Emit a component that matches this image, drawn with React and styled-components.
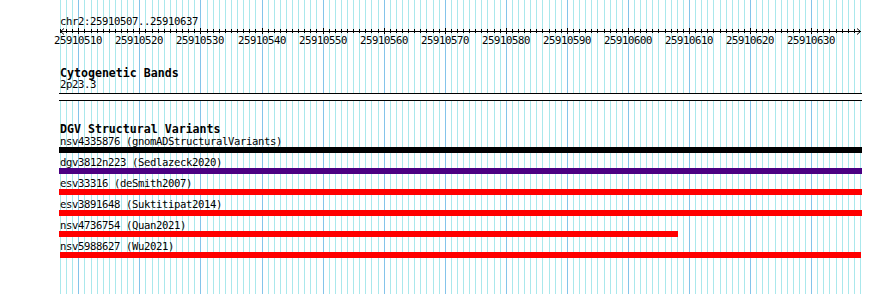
import React from "react"
import styled, { createGlobalStyle } from "styled-components"

const START = 25910507
const END = 25910637
const LEFT = 60
const WIDTH = 800
const BASE = WIDTH / (END - START + 1)

const xOf = (pos) => Math.round(LEFT + (pos - START) * BASE)

const GlobalStyle = createGlobalStyle`
  html, body {
    margin: 0;
    padding: 0;
    background: #fff;
  }
`

const Browser = styled.div`
  position: relative;
  width: 890px;
  height: 294px;
  overflow: hidden;
  background: #fff;
  font-family: "DejaVu Sans Mono", "Liberation Mono", monospace;
  color: #000;
`

const GuideLayer = styled.svg`
  position: absolute;
  inset: 0;
  z-index: 0;
`

const Tracks = styled.div`
  position: relative;
  z-index: 1;
  display: flex;
  flex-direction: column;
  width: 803px;
  margin-left: 59px;
  padding-top: 16px;
`

const Text = styled.div`
  font-size: 10.6px;
  letter-spacing: -0.38px;
  line-height: ${(p) => p.$lh || 11}px;
  height: ${(p) => p.$h || 11}px;
  padding-left: 1px;
  white-space: nowrap;
`

const Title = styled.div`
  font-size: 11.6px;
  font-weight: bold;
  line-height: 12px;
  height: 12px;
  padding-left: 1px;
  margin-top: ${(p) => p.$gap}px;
  white-space: nowrap;
`

const Axis = styled.svg`
  display: block;
  height: 8px;
`

const Labels = styled.div`
  position: relative;
  height: 11px;
`

const Label = styled.span`
  position: absolute;
  top: 0;
  font-size: 10.6px;
  letter-spacing: -0.38px;
  line-height: 11px;
  transform: translateX(-50%);
  white-space: nowrap;
`

const Band = styled.div`
  height: 6px;
  margin-top: 3px;
  border-top: 1px solid #000;
  border-bottom: 1px solid #000;
  background: #fff;
`

const Row = styled.div`
  display: flex;
  flex-direction: column;
  margin-bottom: 5px;
`

const Bar = styled.div`
  height: 6px;
  background: ${(p) => p.$color};
`

const variants = [
  { name: "nsv4335876", study: "gnomADStructuralVariants", start: 25910000, end: 25911000, color: "#000000" },
  { name: "dgv3812n223", study: "Sedlazeck2020", start: 25910000, end: 25911000, color: "#4b0082" },
  { name: "esv33316", study: "deSmith2007", start: 25910000, end: 25911000, color: "#ff0000" },
  { name: "esv3891648", study: "Suktitipat2014", start: 25910000, end: 25911000, color: "#ff0000" },
  { name: "nsv4736754", study: "Quan2021", start: 25910000, end: 25910608, color: "#ff0000" },
  { name: "nsv5988627", study: "Wu2021", start: 25910507, end: 25910638, color: "#ff0000" },
]

function Guides() {
  const lines = []
  for (let p = START; p <= END + 1; p++) {
    const x = xOf(p) + 0.5
    lines.push(
      <line
        key={p}
        x1={x}
        x2={x}
        y1={0}
        y2={294}
        stroke={p % 10 === 0 ? "#84c4ea" : "#aae8ec"}
        strokeWidth="1"
      />
    )
  }
  return (
    <GuideLayer width="890" height="294">
      {lines}
    </GuideLayer>
  )
}

function Ruler() {
  const ticks = []
  const labels = []
  for (let p = START; p <= END; p++) {
    const x = xOf(p) - 59 + 0.5
    const major = p % 10 === 0
    ticks.push(
      <line key={p} x1={x} x2={x} y1={major ? 1 : 2} y2={major ? 7 : 6} stroke="#000" />
    )
    if (major) {
      labels.push(
        <Label key={p} style={{ left: xOf(p) - 59 }}>
          {p}
        </Label>
      )
    }
  }
  return (
    <>
      <Text>chr2:{START}..{END}</Text>
      <Axis width="803" viewBox="0 0 803 8">
        <line x1="1" x2="802" y1="4.5" y2="4.5" stroke="#000" />
        <polyline points="5,1.5 1.5,4.5 5,7.5" fill="none" stroke="#000" />
        <polyline points="798,1.5 801.5,4.5 798,7.5" fill="none" stroke="#000" />
        {ticks}
      </Axis>
      <Labels>{labels}</Labels>
    </>
  )
}

function Variant({ v }) {
  const left = v.start < START ? 59 : xOf(v.start)
  const right = v.end > END + 1 ? 862 : xOf(v.end) + 1
  return (
    <Row>
      <Text $h={10} $lh={8}>
        {v.name} ({v.study})
      </Text>
      <Bar $color={v.color} style={{ marginLeft: left - 59, width: right - left }} />
    </Row>
  )
}

export default function App() {
  return (
    <Browser>
      <GlobalStyle />
      <Guides />
      <Tracks>
        <Ruler />
        <Title $gap={21}>Cytogenetic Bands</Title>
        <Text $lh={10}>2p23.3</Text>
        <Band />
        <Title $gap={22}>DGV Structural Variants</Title>
        <div style={{ height: 2 }} />
        {variants.map((v) => (
          <Variant key={v.name} v={v} />
        ))}
      </Tracks>
    </Browser>
  )
}
